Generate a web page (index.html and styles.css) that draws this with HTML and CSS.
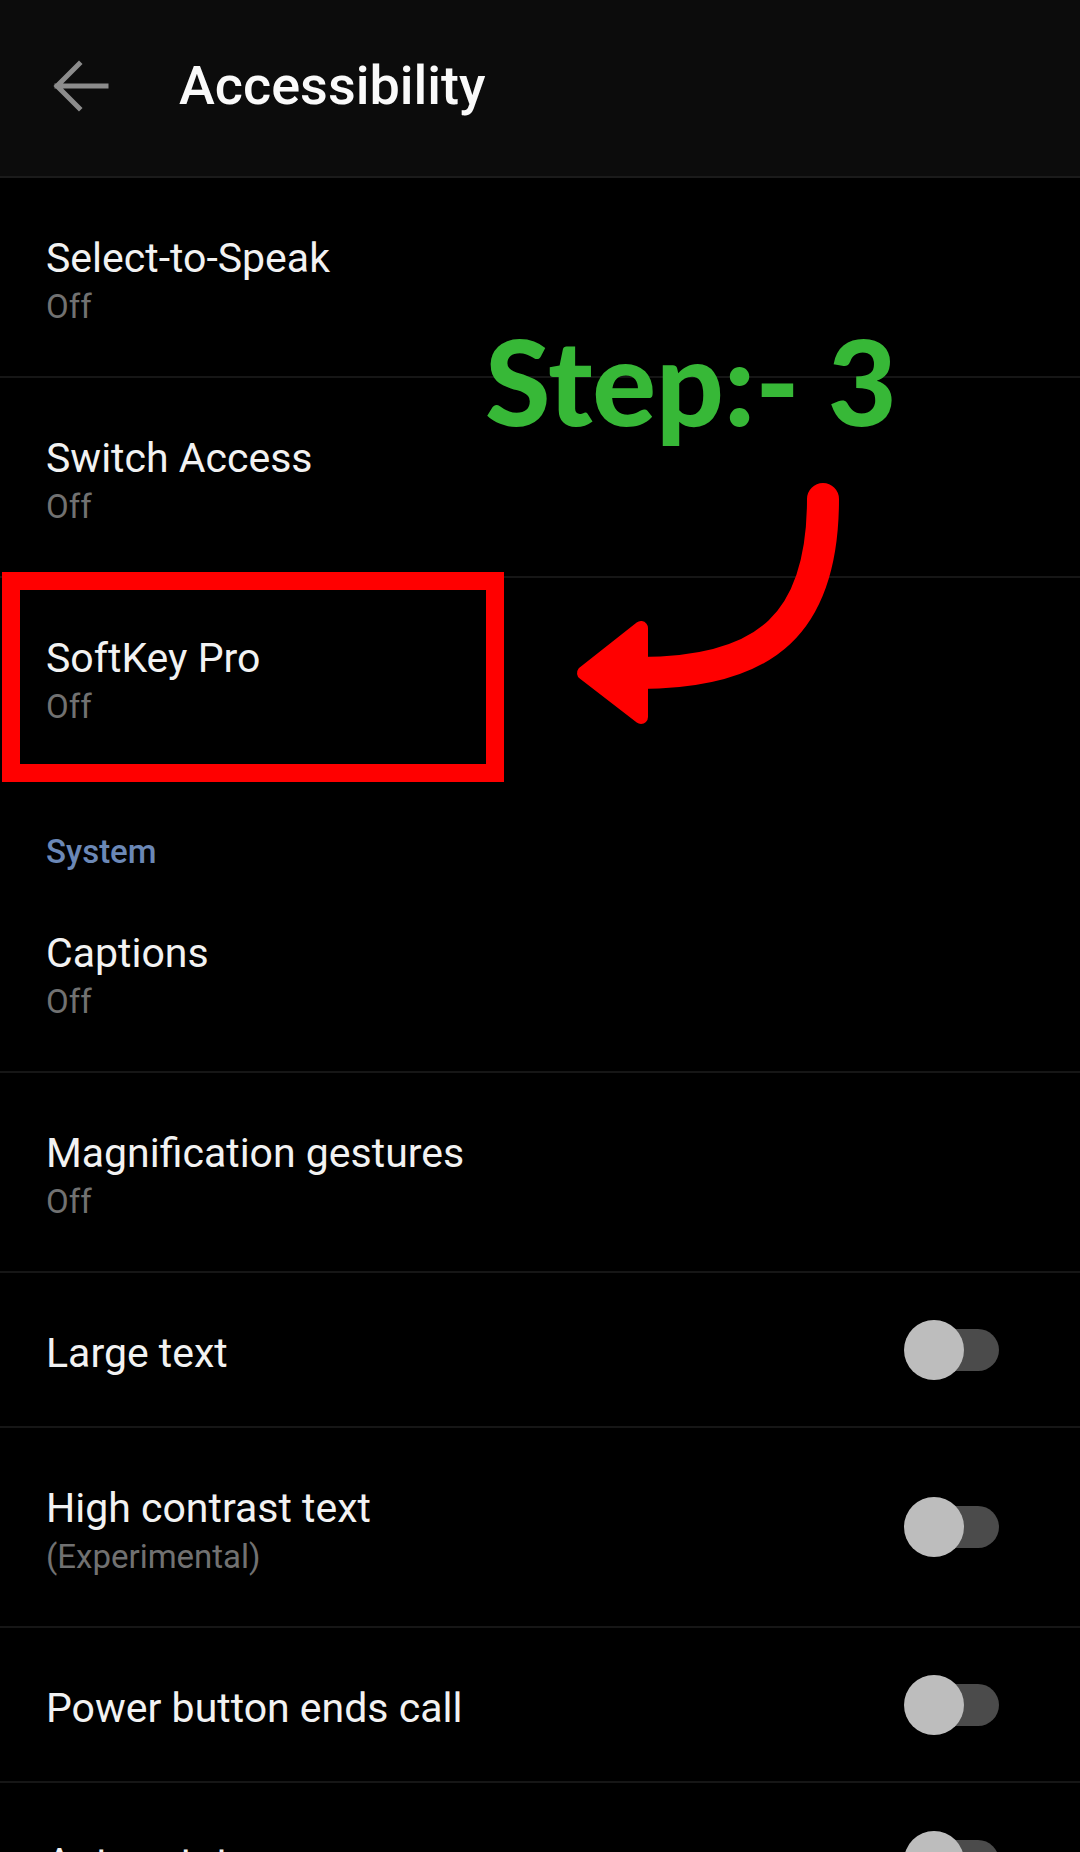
FILE: index.html
```html
<!DOCTYPE html>
<html>
<head>
<meta charset="utf-8">
<link rel="stylesheet" href="styles.css">
</head>
<body>
<div class="screen">
  <header class="appbar">
    <svg class="back" width="60" height="60" viewBox="0 0 60 60">
      <path d="M56 30 H7 M29 8 L7 30 L29 52" fill="none" stroke="#8c8c8c" stroke-width="5" stroke-linecap="square"/>
    </svg>
    <h1 class="title">Accessibility</h1>
  </header>

  <div class="list">
    <div class="row two divided"><div class="text"><div class="primary">Select-to-Speak</div><div class="secondary">Off</div></div></div>
    <div class="row two divided"><div class="text"><div class="primary">Switch Access</div><div class="secondary">Off</div></div></div>
    <div class="row two"><div class="text"><div class="primary">SoftKey Pro</div><div class="secondary">Off</div></div></div>
    <div class="section">System</div>
    <div class="row two divided"><div class="text"><div class="primary">Captions</div><div class="secondary">Off</div></div></div>
    <div class="row two divided"><div class="text"><div class="primary">Magnification gestures</div><div class="secondary">Off</div></div></div>
    <div class="row one divided"><div class="text"><div class="primary">Large text</div></div><div class="switch"><span class="track"></span><span class="thumb"></span></div></div>
    <div class="row two divided"><div class="text"><div class="primary">High contrast text</div><div class="secondary">(Experimental)</div></div><div class="switch"><span class="track"></span><span class="thumb"></span></div></div>
    <div class="row one divided"><div class="text"><div class="primary">Power button ends call</div></div><div class="switch"><span class="track"></span><span class="thumb"></span></div></div>
    <div class="row one"><div class="text"><div class="primary">Auto-rotate screen</div></div><div class="switch"><span class="track"></span><span class="thumb"></span></div></div>
  </div>

  <div class="highlight"></div>
  <div class="step">Step:- 3</div>
  <svg class="arrow" width="320" height="280" viewBox="540 470 320 280">
    <path d="M823 499 C823 622 768 673 640 673" fill="none" stroke="#ff0000" stroke-width="32" stroke-linecap="round"/>
    <polygon points="584,673 641,628 641,717" fill="#ff0000" stroke="#ff0000" stroke-width="14" stroke-linejoin="round"/>
  </svg>
</div>
</body>
</html>
```

FILE: styles.css
```css
html, body {
  margin: 0;
  padding: 0;
  background: #000;
}
.screen {
  position: relative;
  width: 1080px;
  height: 1852px;
  overflow: hidden;
  background: #000;
  font-family: Roboto, "Noto Sans", sans-serif;
  color: #f4f4f4;
}
.appbar {
  height: 178px;
  box-sizing: border-box;
  background: #0c0c0c;
  border-bottom: 2px solid #1b1b1b;
  display: flex;
  align-items: center;
  padding-left: 50px;
  padding-bottom: 4px;
}
.back {
  flex: none;
  display: block;
}
.title {
  margin: 0 0 0 69px;
  font-size: 54px;
  font-weight: 500;
  line-height: 64px;
  color: #fafafa;
}
.list {
  display: flex;
  flex-direction: column;
}
.row {
  box-sizing: border-box;
  display: flex;
  align-items: center;
  padding: 0 81px 0 46px;
}
.row.two { height: 200px; }
.row.one { height: 155px; }
.row.divided { border-bottom: 2px solid #161616; }
.text {
  flex: 1;
  align-self: flex-start;
  padding-top: 55px;
}
.primary {
  font-size: 41px;
  line-height: 50px;
  color: #f2f2f2;
}
.secondary {
  font-size: 33px;
  line-height: 48px;
  color: #717171;
}
.section {
  height: 95px;
  box-sizing: border-box;
  padding: 55px 0 0 46px;
  font-size: 33px;
  line-height: 38px;
  font-weight: 500;
  color: #6b88b6;
}
.switch {
  position: relative;
  width: 102px;
  height: 60px;
  flex: none;
}
.track {
  position: absolute;
  right: 0;
  top: 9px;
  width: 90px;
  height: 42px;
  border-radius: 21px;
  background: #4b4b4b;
}
.thumb {
  position: absolute;
  left: 7px;
  top: 0;
  width: 60px;
  height: 60px;
  border-radius: 50%;
  background: #bdbdbd;
}
.highlight {
  position: absolute;
  left: 2px;
  top: 572px;
  width: 502px;
  height: 210px;
  box-sizing: border-box;
  border: 18px solid #ff0000;
}
.step {
  position: absolute;
  left: 485px;
  top: 305px;
  font-family: Lato, "Open Sans", sans-serif;
  font-weight: 900;
  font-size: 119px;
  line-height: 150px;
  color: #37b837;
  letter-spacing: 0px;
  white-space: nowrap;
}
.arrow {
  position: absolute;
  left: 540px;
  top: 470px;
}
```
